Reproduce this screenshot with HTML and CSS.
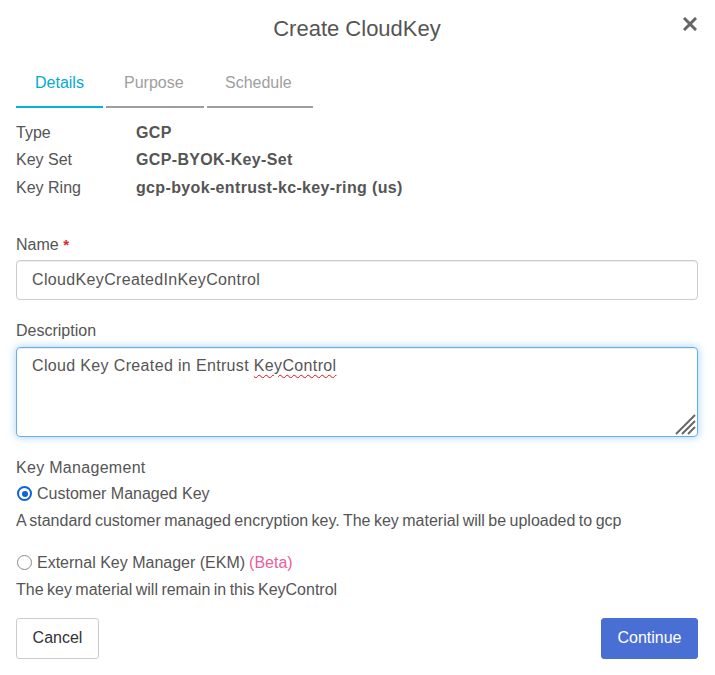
FILE: index.html
```html
<!DOCTYPE html>
<html>
<head>
<meta charset="utf-8">
<title>Create CloudKey</title>
<link rel="stylesheet" href="styles.css">
</head>
<body>
<div class="modal">
  <div class="header">
    <h1 class="title">Create CloudKey</h1>
    <svg class="close" width="14" height="14" viewBox="0 0 14 14">
      <g stroke="#666" stroke-width="3" stroke-linecap="square">
        <line x1="2" y1="2" x2="12" y2="12"/>
        <line x1="12" y1="2" x2="2" y2="12"/>
      </g>
    </svg>
  </div>
  <div class="tabs">
    <div class="tab active">Details</div>
    <div class="tab">Purpose</div>
    <div class="tab">Schedule</div>
  </div>
  <div class="info">
    <div class="label">Type</div><div class="value">GCP</div>
    <div class="label">Key Set</div><div class="value">GCP-BYOK-Key-Set</div>
    <div class="label">Key Ring</div><div class="value">gcp-byok-entrust-kc-key-ring (us)</div>
  </div>
  <div class="field first">
    <div class="field-label">Name <span class="req">*</span></div>
    <div class="input">CloudKeyCreatedInKeyControl</div>
  </div>
  <div class="field">
    <div class="field-label">Description</div>
    <div class="textarea">Cloud Key Created in Entrust <span class="spell">KeyControl</span>
      <svg class="grip" width="22" height="22" viewBox="0 0 22 22">
        <g stroke="#666" stroke-width="2">
          <line x1="2" y1="21" x2="21" y2="2"/>
          <line x1="8" y1="21" x2="21" y2="8"/>
          <line x1="14" y1="21" x2="21" y2="14"/>
        </g>
      </svg>
    </div>
  </div>
  <div class="km">
    <div class="km-title">Key Management</div>
    <div class="radio-row"><span class="radio checked"></span>Customer Managed Key</div>
    <div class="help">A standard customer managed encryption key. The key material will be uploaded to gcp</div>
    <div class="radio-row second"><span class="radio"></span>External Key Manager (EKM) <span class="beta">(Beta)</span></div>
    <div class="help">The key material will remain in this KeyControl</div>
  </div>
  <div class="footer">
    <button class="btn btn-default">Cancel</button>
    <button class="btn btn-primary">Continue</button>
  </div>
</div>
</body>
</html>
```

FILE: styles.css
```css
html, body {
  margin: 0;
  padding: 0;
  background: #fff;
}
body {
  font-family: "Liberation Sans", Arial, sans-serif;
  font-size: 16px;
  color: #555;
}
.modal {
  width: 715px;
  padding: 0 17px 0 16px;
  box-sizing: border-box;
}
.header {
  position: relative;
  height: 56px;
  display: flex;
  align-items: center;
  justify-content: center;
}
.title {
  margin: 0;
  font-weight: normal;
  font-size: 22px;
  color: #555;
  padding-top: 1px;
}
.close {
  position: absolute;
  right: 1px;
  top: 17px;
}
.tabs {
  display: flex;
  gap: 3px;
  margin-top: 11px;
}
.tab {
  box-sizing: border-box;
  padding: 0 0 0 18px;
  height: 41px;
  line-height: 32px;
  border-bottom: 2px solid #9e9e9e;
  color: #9e9e9e;
  font-size: 16px;
}
.tab:nth-child(1) { width: 87px; padding-left: 19px; }
.tab:nth-child(2) { width: 98px; }
.tab:nth-child(3) { width: 106px; }
.tab.active {
  color: #00acd0;
  border-bottom-color: #00b4d8;
}
.info {
  display: grid;
  grid-template-columns: 120px 1fr;
  grid-auto-rows: 27.5px;
  align-items: center;
  margin-top: 11px;
}
.value {
  font-weight: bold;
  letter-spacing: 0.35px;
}
.field {
  margin-top: 21px;
}
.field.first {
  margin-top: 33px;
}
.field-label {
  height: 19px;
  line-height: 19px;
}
.req {
  color: #e0242e;
  font-weight: bold;
  font-size: 15px;
}
.input {
  margin-top: 6px;
  height: 40px;
  box-sizing: border-box;
  border: 1px solid #ccc;
  border-radius: 4px;
  padding: 0 15px;
  line-height: 38px;
  letter-spacing: 0.35px;
  box-shadow: inset 0 1px 1px rgba(0,0,0,.075);
}
.textarea {
  position: relative;
  margin-top: 7px;
  height: 90px;
  box-sizing: border-box;
  border: 1px solid #66afe9;
  border-radius: 4px;
  padding: 8px 15px;
  line-height: 20px;
  letter-spacing: 0.35px;
  box-shadow: inset 0 1px 1px rgba(0,0,0,.075), 0 0 8px rgba(102,175,233,.6);
}
.spell {
  text-decoration: underline wavy #e01010;
  text-decoration-thickness: 1px;
  text-underline-offset: 3px;
}
.grip {
  position: absolute;
  right: 1px;
  bottom: 1px;
}
.km {
  margin-top: 21px;
}
.km-title {
  line-height: 20px;
  letter-spacing: 0.3px;
}
.radio-row {
  display: flex;
  align-items: center;
  margin-top: 6px;
  line-height: 20px;
}
.radio-row.second {
  margin-top: 22px;
}
.radio {
  width: 15px;
  height: 15px;
  box-sizing: border-box;
  border-radius: 50%;
  border: 1.5px solid #8a8a8a;
  margin: 0 5px 0 1px;
  position: relative;
}
.radio.checked {
  border: 2px solid #0b64dc;
}
.radio.checked::after {
  content: "";
  position: absolute;
  left: 2.5px;
  top: 2.5px;
  width: 6px;
  height: 6px;
  border-radius: 50%;
  background: #0b64dc;
}
.beta {
  color: #e8609a;
  margin-left: 4px;
}
.help {
  margin-top: 7px;
  line-height: 20px;
  word-spacing: -1px;
}
.footer {
  display: flex;
  justify-content: space-between;
  margin-top: 18px;
}
.btn {
  font-family: "Liberation Sans", Arial, sans-serif;
  font-size: 16px;
  height: 41px;
  border-radius: 3px;
  padding: 0 15px;
}
.btn-default {
  background: #fff;
  border: 1px solid #ccc;
  color: #333;
  width: 83px;
}
.btn-primary {
  background: #4a6fd4;
  border: 1px solid #4a6fd4;
  color: #fff;
  width: 97px;
}
```
